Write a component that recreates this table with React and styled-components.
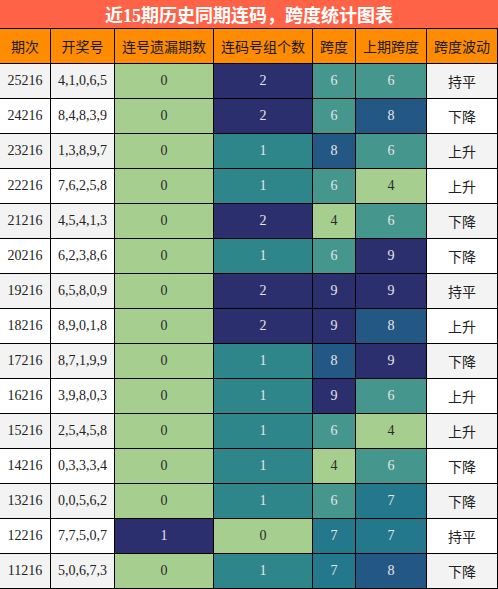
import React from 'react';
import styled, { createGlobalStyle } from 'styled-components';

const GlobalStyle = createGlobalStyle`
  html, body {
    margin: 0;
    padding: 0;
    background: #ffffff;
  }
  body {
    font-family: "Liberation Serif", "Noto Sans CJK SC", serif;
  }
`;

const Wrap = styled.div`
  width: 498px;
`;

const Title = styled.div`
  height: 28px;
  background: #ff6347;
  color: #ffffff;
  font-size: 18px;
  font-weight: bold;
  display: flex;
  align-items: center;
  justify-content: center;
`;

const Grid = styled.div`
  display: grid;
  grid-template-columns: 50px 63px 98px 98px 42px 70px 70px;
  grid-auto-rows: 34px;
  gap: 1px;
  padding: 1px 1px 1px 0;
  background: #000000;
`;

const HeadCell = styled.div`
  background: #ff8c00;
  color: #1a1a1a;
  font-family: "Noto Sans CJK SC", sans-serif;
  font-size: 14px;
  display: flex;
  align-items: center;
  justify-content: center;
`;

const Cell = styled.div`
  background: ${(p) => (p.$odd ? '#f3f3f3' : '#ffffff')};
  color: #222222;
  font-size: 14px;
  display: flex;
  align-items: center;
  justify-content: center;
`;

const TrendCell = styled(Cell)`
  font-family: "Noto Sans CJK SC", sans-serif;
`;

const ColorCell = styled.div`
  background: ${(p) => p.$bg};
  color: ${(p) => (p.$light ? '#e6e6e6' : '#2a2a2a')};
  font-size: 14px;
  display: flex;
  align-items: center;
  justify-content: center;
`;

const GREEN = '#a6cf8f';
const NAVY = '#2c2f6d';

// colour scale for 0..2 columns
const smallScale = { 0: GREEN, 1: '#2e868a', 2: NAVY };
// colour scale for span columns
const spanScale = {
  4: GREEN,
  6: '#45968c',
  7: '#24788c',
  8: '#245884',
  9: NAVY,
};
const missScale = { 0: GREEN, 1: NAVY };

const headers = ['期次', '开奖号', '连号遗漏期数', '连码号组个数', '跨度', '上期跨度', '跨度波动'];

const rows = [
  ['25216', '4,1,0,6,5', 0, 2, 6, 6, '持平'],
  ['24216', '8,4,8,3,9', 0, 2, 6, 8, '下降'],
  ['23216', '1,3,8,9,7', 0, 1, 8, 6, '上升'],
  ['22216', '7,6,2,5,8', 0, 1, 6, 4, '上升'],
  ['21216', '4,5,4,1,3', 0, 2, 4, 6, '下降'],
  ['20216', '6,2,3,8,6', 0, 1, 6, 9, '下降'],
  ['19216', '6,5,8,0,9', 0, 2, 9, 9, '持平'],
  ['18216', '8,9,0,1,8', 0, 2, 9, 8, '上升'],
  ['17216', '8,7,1,9,9', 0, 1, 8, 9, '下降'],
  ['16216', '3,9,8,0,3', 0, 1, 9, 6, '上升'],
  ['15216', '2,5,4,5,8', 0, 1, 6, 4, '上升'],
  ['14216', '0,3,3,3,4', 0, 1, 4, 6, '下降'],
  ['13216', '0,0,5,6,2', 0, 1, 6, 7, '下降'],
  ['12216', '7,7,5,0,7', 1, 0, 7, 7, '持平'],
  ['11216', '5,0,6,7,3', 0, 1, 7, 8, '下降'],
];

const Scaled = ({ value, scale }) => {
  const bg = scale[value];
  return (
    <ColorCell $bg={bg} $light={bg !== GREEN}>
      {value}
    </ColorCell>
  );
};

const App = () => {
  return (
    <Wrap>
      <GlobalStyle />
      <Title>近15期历史同期连码，跨度统计图表</Title>
      <Grid>
        {headers.map((h) => (
          <HeadCell key={h}>{h}</HeadCell>
        ))}
        {rows.map((r, i) => {
          const odd = i % 2 === 0;
          return (
            <React.Fragment key={r[0]}>
              <Cell $odd={odd}>{r[0]}</Cell>
              <Cell $odd={odd}>{r[1]}</Cell>
              <Scaled value={r[2]} scale={missScale} />
              <Scaled value={r[3]} scale={smallScale} />
              <Scaled value={r[4]} scale={spanScale} />
              <Scaled value={r[5]} scale={spanScale} />
              <TrendCell $odd={odd}>{r[6]}</TrendCell>
            </React.Fragment>
          );
        })}
      </Grid>
    </Wrap>
  );
};

export default App;
